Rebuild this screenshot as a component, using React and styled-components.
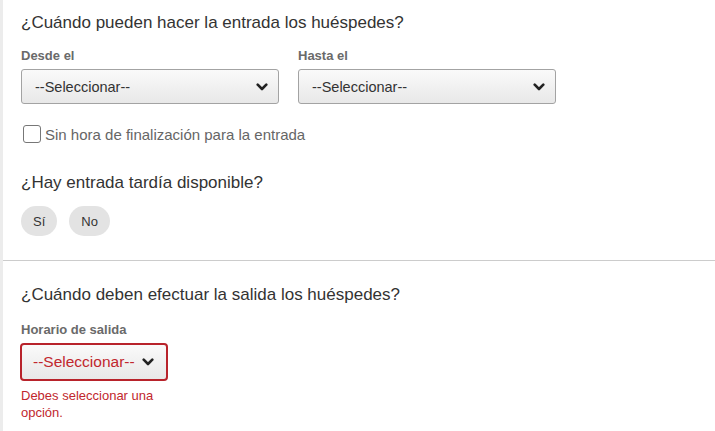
import styled, { createGlobalStyle } from "styled-components";

const GlobalStyle = createGlobalStyle`
    html, body {
        margin: 0;
        padding: 0;
        background-color: #ffffff;
    }
    * {
        box-sizing: border-box;
    }
`;

function Chevron({ color }) {
    return (
        <svg width="12" height="8" viewBox="0 0 12 8">
            <path d="M1.7 1.7 L6 6 L10.3 1.7" fill="none" stroke={color} strokeWidth="2.6" strokeLinecap="round" strokeLinejoin="round" />
        </svg>
    );
}

function Dropdown({ error, width }) {
    return (
        <SelectBox $error={error} $width={width} type="button">
            <span>--Seleccionar--</span>
            <Chevron color="#222222" />
        </SelectBox>
    );
}

export default function App() {
    return (
        <Page>
            <GlobalStyle />
            <Section>
                <Question>¿Cuándo pueden hacer la entrada los huéspedes?</Question>
                <FieldRow>
                    <Field>
                        <Label>Desde el</Label>
                        <Dropdown width="258px" />
                    </Field>
                    <Field>
                        <Label>Hasta el</Label>
                        <Dropdown width="258px" />
                    </Field>
                </FieldRow>
                <CheckRow>
                    <CheckBox />
                    <CheckText>Sin hora de finalización para la entrada</CheckText>
                </CheckRow>
                <Question $top="30px">¿Hay entrada tardía disponible?</Question>
                <PillRow>
                    <Pill type="button">Sí</Pill>
                    <Pill type="button">No</Pill>
                </PillRow>
            </Section>
            <Section $last>
                <Question>¿Cuándo deben efectuar la salida los huéspedes?</Question>
                <Field $top="17px">
                    <Label>Horario de salida</Label>
                    <Dropdown error width="148px" />
                    <ErrorText>Debes seleccionar una opción.</ErrorText>
                </Field>
            </Section>
        </Page>
    );
}

const Page = styled.div`
    min-height: 100vh;
    border-left: 3px solid #ececec;
    font-family: "Liberation Sans", Arial, Helvetica, sans-serif;
    color: #333333;
`;

const Section = styled.div`
    padding: ${(p) => (p.$last ? "24px 18px 14px" : "13px 18px 24px")};
    border-bottom: ${(p) => (p.$last ? "none" : "1px solid #cccccc")};
`;

const Question = styled.h2`
    margin: ${(p) => p.$top || "0"} 0 0;
    font-size: 17px;
    line-height: 20px;
    font-weight: 400;
    color: #333333;
`;

const FieldRow = styled.div`
    display: flex;
    gap: 19px;
    margin-top: 15px;
`;

const Field = styled.div`
    display: flex;
    flex-direction: column;
    align-items: flex-start;
    margin-top: ${(p) => p.$top || "0"};
    width: min-content;
`;

const Label = styled.div`
    font-size: 13px;
    line-height: 16px;
    font-weight: 700;
    color: #6a6a6a;
    margin-bottom: 5px;
    white-space: nowrap;
`;

const SelectBox = styled.button`
    display: flex;
    align-items: center;
    justify-content: space-between;
    width: ${(p) => p.$width};
    height: ${(p) => (p.$error ? "38px" : "35px")};
    margin-left: ${(p) => (p.$error ? "-1px" : "0")};
    padding: ${(p) => (p.$error ? "0 12px 0 11px" : "0 10px 0 13px")};
    border: ${(p) => (p.$error ? "2px solid #b8232b" : "1px solid #a3a3a3")};
    border-radius: ${(p) => (p.$error ? "4px" : "3px")};
    background: linear-gradient(#fafafa, #e8e8e8);
    font-family: inherit;
    font-size: ${(p) => (p.$error ? "15.5px" : "14.5px")};
    color: ${(p) => (p.$error ? "#c1272d" : "#333333")};
    cursor: pointer;

    span {
        white-space: nowrap;
    }
`;

const CheckRow = styled.label`
    display: flex;
    align-items: center;
    gap: 4px;
    margin-top: 21px;
    padding-left: 2px;
`;

const CheckBox = styled.span`
    width: 18px;
    height: 18px;
    border: 1px solid #777777;
    border-radius: 3px;
    background-color: #ffffff;
`;

const CheckText = styled.span`
    font-size: 15px;
    color: #666666;
`;

const PillRow = styled.div`
    display: flex;
    gap: 12px;
    margin-top: 13px;
`;

const Pill = styled.button`
    height: 30px;
    padding: 0 12px;
    border: none;
    border-radius: 15px;
    background-color: #e3e3e3;
    font-family: inherit;
    font-size: 13px;
    color: #333333;
    cursor: pointer;
`;

const ErrorText = styled.div`
    width: 148px;
    margin-top: 6px;
    font-size: 13px;
    line-height: 17px;
    color: #c1272d;
`;
